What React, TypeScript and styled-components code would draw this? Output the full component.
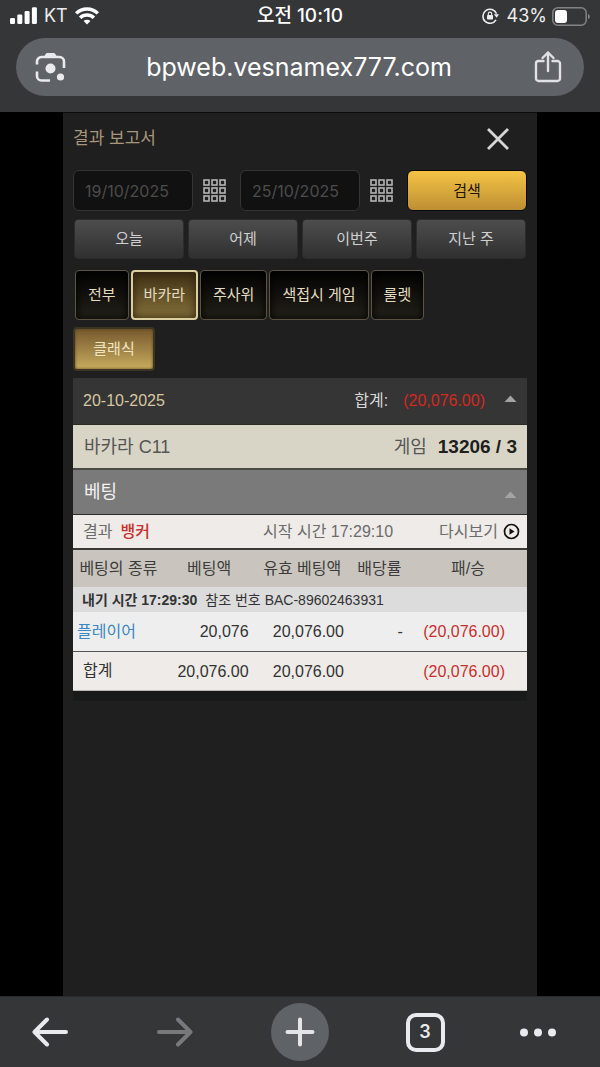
import React, { useState } from "react";
import styled, { createGlobalStyle, css } from "styled-components";

const GlobalStyle = createGlobalStyle`
  *, *::before, *::after { box-sizing: border-box; }
  body { margin: 0; background: #000; }
  button, input { font: inherit; color: inherit; margin: 0; }
  button { cursor: pointer; }
`;

const systemFont = `Inter, "Noto Sans CJK KR", sans-serif`;
const reportFont = `"Liberation Sans", "Noto Sans CJK KR", sans-serif`;

const Page = styled.div`
  display: flex;
  flex-direction: column;
  min-height: 100vh;
  font-family: ${reportFont};
`;

/* ---------- browser chrome ---------- */

const BrowserTop = styled.header`
  padding-bottom: 16px;
  background: #353638;
  color: #fff;
  font-family: ${systemFont};
`;

const StatusBar = styled.div`
  display: grid;
  grid-template-columns: 1fr auto 1fr;
  align-items: center;
  height: 32px;
  margin-bottom: 6px;
  padding: 0 10px;
  font-size: 18px;
  line-height: 24px;
`;

const StatusGroup = styled.div<{ $end?: boolean }>`
  display: flex;
  align-items: center;
  gap: ${(p) => (p.$end ? 8 : 7)}px;
  justify-content: ${(p) => (p.$end ? "flex-end" : "flex-start")};
  color: #ececec;
`;

const Clock = styled.time`
  font-size: 19px;
  font-weight: 500;
`;

const BatteryGroup = styled.span`
  display: flex;
  align-items: center;
  gap: 5px;
`;

const AddressBar = styled.div`
  display: flex;
  align-items: center;
  height: 58px;
  margin: 0 16px;
  padding: 0 18px 0 16px;
  border-radius: 29px;
  background: #5f6267;
`;

const Address = styled.input`
  flex: 1;
  min-width: 0;
  padding: 0;
  border: 0;
  outline: 0;
  background: transparent;
  font-size: 25px;
  line-height: 32px;
  text-align: center;
`;

const IconButton = styled.button`
  display: flex;
  align-items: center;
  justify-content: center;
  width: 36px;
  height: 40px;
  padding: 0;
  border: 0;
  background: none;
`;

const BrowserToolbar = styled.nav`
  display: flex;
  align-items: center;
  justify-content: space-between;
  height: 71px;
  padding: 0 20px;
  background: #353638;
  border-top: 1px solid #28292a;
  font-family: ${systemFont};
`;

const ToolbarButton = styled.button<{ $start?: boolean }>`
  display: flex;
  align-items: center;
  justify-content: ${(p) => (p.$start ? "flex-start" : "center")};
  width: 60px;
  height: 60px;
  padding: 0;
  border: 0;
  background: none;
  color: #e8eaed;
  &:disabled {
    color: #77797b;
  }
`;

const PlusDisc = styled.span`
  display: flex;
  align-items: center;
  justify-content: center;
  width: 58px;
  height: 58px;
  border-radius: 50%;
  background: #5f6368;
`;

const TabCount = styled.span`
  display: flex;
  align-items: center;
  justify-content: center;
  width: 39px;
  height: 39px;
  border: 4px solid #e8eaed;
  border-radius: 10px;
  font-size: 18px;
  font-weight: 600;
  line-height: 20px;
`;

/* ---------- report panel ---------- */

const Panel = styled.main`
  flex: 1;
  margin: 0 63px;
  padding: 0 10px 20px;
  border-top: 1px solid #0c0c0c;
  background: #1f1f1f;
`;

const TitleRow = styled.div`
  display: flex;
  align-items: center;
  justify-content: space-between;
  height: 51px;
  margin-bottom: 6px;
  padding-right: 11px;
`;

const Title = styled.h1`
  margin: 0;
  color: #a8967a;
  font-size: 17px;
  font-weight: 400;
  line-height: 24px;
`;

const DateForm = styled.form`
  display: grid;
  grid-template-columns: 1fr 47px 1fr 47px 1fr;
  align-items: center;
  margin-bottom: 8px;
`;

const DateInput = styled.input`
  width: 100%;
  min-width: 0;
  height: 41px;
  padding: 0 11px;
  border: 1px solid #343434;
  border-radius: 6px;
  outline: 0;
  background: #111;
  color: #4c4c4c;
  font-family: ${systemFont};
  font-size: 16px;
`;

const CalendarButton = styled(IconButton)`
  width: 43px;
  color: #b4b4b4;
`;

const SearchButton = styled.button`
  height: 41px;
  padding: 0;
  border: 1px solid #0a0a0a;
  border-radius: 6px;
  background: linear-gradient(#f4c344, #bd8f33);
  color: #1d1503;
  font-size: 15px;
  line-height: 20px;
`;

const QuickRow = styled.div`
  display: grid;
  grid-template-columns: repeat(4, 1fr);
  gap: 4px;
  margin-bottom: 11px;
  padding: 0 1px;
`;

const QuickButton = styled.button`
  height: 40px;
  padding: 0;
  border: 1px solid #2c2c2c;
  border-radius: 4px;
  background: linear-gradient(#4d4d4d, #303030);
  color: #cfcfcf;
  font-size: 15px;
  line-height: 20px;
`;

const TabRow = styled.div`
  display: flex;
  flex-wrap: wrap;
  gap: 2px;
  margin-bottom: 7px;
  padding: 0 2px;
`;

const GameTab = styled.button<{ $active: boolean }>`
  height: 50px;
  padding: 0 12px;
  border: 1px solid #5c5443;
  border-radius: 4px;
  background: linear-gradient(#020202, #232119);
  box-shadow: inset 0 0 8px #000;
  color: #e4dcc0;
  font-size: 15px;
  line-height: 20px;
  ${(p) =>
    p.$active &&
    css`
      border: 2px solid #dccf9f;
      padding: 0 11px;
      background: linear-gradient(#3f3015, #85713a);
      box-shadow: inset 0 0 10px #2c210d;
    `}
`;

const SubTab = styled.button`
  display: block;
  width: 82px;
  height: 44px;
  margin-bottom: 7px;
  padding: 0;
  border: 2px solid #3d3523;
  border-radius: 4px;
  background: linear-gradient(#76592e, #c6ab5d);
  box-shadow: inset 0 0 3px #5b431a;
  color: #f0e5c2;
  font-size: 15px;
  line-height: 20px;
`;

const Report = styled.section`
  border-bottom: 10px solid #181a19;
  color: #444;
`;

const Bar = styled.div`
  display: flex;
  align-items: center;
  width: 100%;
  padding: 0 10px;
  border: 0;
  border-bottom: 1px solid #2a2a26;
  text-align: left;
`;

const DayBar = styled(Bar)`
  height: 47px;
  background: #353535;
  color: #d6c7a0;
  font-size: 16px;
  line-height: 24px;
`;

const DayTotal = styled.span`
  margin-left: auto;
  color: #d8d8d8;
`;

const DayAmount = styled.span`
  margin: 0 19px 0 15px;
  color: #d6281f;
`;

const GameBar = styled(Bar)`
  height: 45px;
  padding: 0 10px 0 11px;
  border-bottom: 2px solid #4b4a45;
  background: #d9d5c6;
  color: #555;
  font-size: 18px;
  line-height: 24px;
`;

const GameLabel = styled.span`
  margin-left: auto;
`;

const GameNumber = styled.strong`
  margin-left: 11px;
  color: #1e1e1e;
  font-size: 19px;
`;

const BetBar = styled(Bar)`
  height: 45px;
  padding: 0 10px 0 11px;
  background: #7a7a7a;
  color: #f2f2f2;
  font-size: 18px;
  line-height: 24px;
`;

const Caret = styled.svg<{ $corner?: boolean }>`
  display: block;
  color: #a3a3a3;
  ${(p) =>
    p.$corner &&
    css`
      align-self: flex-end;
      margin: 0 0 11px auto;
    `}
`;

const ResultBar = styled(Bar)`
  height: 35px;
  padding-right: 7px;
  border-bottom: 2px solid #3a3935;
  background: #efebe8;
  color: #6b6b6b;
  font-size: 16px;
  line-height: 24px;
`;

const Winner = styled.span`
  margin-left: 8px;
  color: #c9302c;
  font-weight: 500;
`;

const StartTime = styled.span`
  margin: 0 46px 0 auto;
`;

const Replay = styled.a`
  display: flex;
  align-items: center;
  gap: 5px;
  color: inherit;
  text-decoration: none;
`;

const BetTable = styled.table`
  width: 100%;
  border-collapse: collapse;
  table-layout: fixed;
  color: #333;
  font-size: 16px;
  line-height: 24px;
`;

const HeadCell = styled.th`
  height: 37px;
  padding: 0;
  background: #c9c5be;
  color: #3c3c3c;
  font-weight: 400;
  white-space: nowrap;
`;

const ReferenceCell = styled.td`
  height: 25px;
  padding: 0 9px;
  background: #dcdcdc;
  font-size: 14px;
  white-space: nowrap;
`;

const BetTime = styled.strong`
  margin-right: 8px;
`;

const BetRow = styled.tr<{ $total?: boolean }>`
  height: 39px;
  background: ${(p) => (p.$total ? "#efebe8" : "#eeeeef")};
  border-bottom: 1px solid ${(p) => (p.$total ? "#b9b6b3" : "#555")};
`;

const LabelCell = styled.th<{ $total?: boolean }>`
  padding: 1px 0 0 ${(p) => (p.$total ? 10 : 4)}px;
  color: ${(p) => (p.$total ? "inherit" : "#3b86c4")};
  font-weight: 400;
  text-align: left;
`;

const AmountCell = styled.td`
  padding: 2px 6px 0 0;
  text-align: right;
`;

const LossCell = styled.td`
  padding: 2px 22px 0 0;
  color: #c9302c;
  text-align: right;
`;

/* ---------- drawings ---------- */

const SignalIcon = () => (
  <svg width="27" height="18" viewBox="0 0 27 18" fill="#fff" aria-hidden="true">
    <rect x="0" y="11" width="5" height="6" rx="1.3" />
    <rect x="7.3" y="7.5" width="5" height="9.5" rx="1.3" />
    <rect x="14.6" y="4" width="5" height="13" rx="1.3" />
    <rect x="21.9" y="0.3" width="5" height="16.7" rx="1.3" />
  </svg>
);

const WifiIcon = () => (
  <svg width="24" height="18" viewBox="0 0 24 18" fill="none" stroke="#fff" strokeWidth="3.4" aria-hidden="true">
    <path d="M1.2 6.4a15.3 15.3 0 0 1 21.6 0" />
    <path d="M5.1 10.8a9.8 9.8 0 0 1 13.8 0" />
    <path d="M12 17.6l-3.4-3.5a4.8 4.8 0 0 1 6.8 0z" fill="#fff" stroke="none" />
  </svg>
);

const RotationLockIcon = () => (
  <svg width="17" height="16" viewBox="0 0 17 16" fill="none" aria-hidden="true">
    <path d="M14.5 5.8A7 7 0 1 0 14 11.8" stroke="#eee" strokeWidth="1.6" />
    <path d="M11.8 6.2h5.2l-2.3 3.6z" fill="#eee" />
    <rect x="5" y="7" width="6" height="4.6" rx="0.8" fill="#eee" />
    <path d="M6.3 7V5.8a1.7 1.7 0 0 1 3.4 0V7" stroke="#eee" strokeWidth="1.1" />
  </svg>
);

const BatteryIcon = () => (
  <svg width="38" height="19" viewBox="0 0 38 19" fill="none" aria-hidden="true">
    <rect x="0.8" y="0.8" width="33.4" height="17.4" rx="5" stroke="#828385" strokeWidth="1.5" />
    <rect x="3" y="3" width="12" height="13" rx="3" fill="#fff" />
    <path d="M36 7v5c1.4-.5 1.8-1.5 1.8-2.5S37.4 7.5 36 7z" fill="#828385" />
  </svg>
);

const LensIcon = () => (
  <svg width="31" height="31" viewBox="0 0 31 31" fill="none" aria-hidden="true">
    <path
      d="M2 12.500V9.500a4.500 4.500 0 0 1 4.500-4.500h18a4.500 4.500 0 0 1 4.500 4.500V16M2 19.500v4.500a4.500 4.500 0 0 0 4.500 4.500h8.500"
      stroke="#e8eaed"
      strokeWidth="2.6"
    />
    <path d="M8.500 5.500l2.200-3.600C11 1.300 11.600 1 12.300 1h6.400c.7 0 1.300.3 1.600.9l2.200 3.600z" fill="#e8eaed" />
    <circle cx="15.5" cy="16.5" r="5" fill="#e8eaed" />
    <circle cx="25.5" cy="25" r="3.6" fill="#e8eaed" />
  </svg>
);

const ShareIcon = () => (
  <svg width="28" height="34" viewBox="0 0 28 34" fill="none" stroke="#dfe1e5" strokeWidth="2.4" strokeLinecap="round" strokeLinejoin="round" aria-hidden="true">
    <path d="M9.500 11H4.500A2.500 2.500 0 0 0 2 13.500v15A2.500 2.500 0 0 0 4.500 31h19a2.500 2.500 0 0 0 2.500-2.500v-15a2.500 2.500 0 0 0-2.500-2.500h-5" />
    <path d="M14 21V2.500M8.500 8L14 2.500 19.500 8" />
  </svg>
);

const CloseIcon = () => (
  <svg width="24" height="24" viewBox="0 0 24 24" stroke="#d6d6d6" strokeWidth="2.8" aria-hidden="true">
    <path d="M2 2l20 20M22 2L2 22" />
  </svg>
);

const CalendarGridIcon = () => (
  <svg width="23" height="23" viewBox="0 0 23 23" fill="none" stroke="currentColor" strokeWidth="1.6" aria-hidden="true">
    {[0, 8, 16].map((y) =>
      [0, 8, 16].map((x) => <rect key={`${x}-${y}`} x={x + 1} y={y + 1} width="5" height="5" />)
    )}
  </svg>
);

const CaretUp = ({ corner }: { corner?: boolean }) => (
  <Caret $corner={corner} width="13" height="12" viewBox="0 0 13 12" fill="currentColor" aria-hidden="true">
    <path d="M0.500 7L6.500 0.500 12.500 7z" />
  </Caret>
);

const PlayIcon = () => (
  <svg width="17" height="17" viewBox="0 0 17 17" fill="none" aria-hidden="true">
    <circle cx="8.5" cy="8.5" r="7" stroke="#111" strokeWidth="1.7" />
    <path d="M6.500 5.200v6.600l5-3.300z" fill="#111" />
  </svg>
);

const ArrowIcon = ({ forward }: { forward?: boolean }) => (
  <svg width="36" height="32" viewBox="0 0 36 32" fill="none" stroke="currentColor" strokeWidth="4" strokeLinecap="round" strokeLinejoin="round" aria-hidden="true">
    <path d={forward ? "M2 16h31M21 3.500L33.500 16 21 28.500" : "M34 16H3M15 3.500L2.500 16 15 28.500"} />
  </svg>
);

const PlusIcon = () => (
  <svg width="30" height="30" viewBox="0 0 30 30" stroke="#e3e5e8" strokeWidth="4" strokeLinecap="round" aria-hidden="true">
    <path d="M15 2.500v25M2.500 15h25" />
  </svg>
);

const MoreIcon = () => (
  <svg width="36" height="9" viewBox="0 0 36 9" fill="currentColor" aria-hidden="true">
    <circle cx="4" cy="4.5" r="4" />
    <circle cx="18" cy="4.5" r="4" />
    <circle cx="32" cy="4.5" r="4" />
  </svg>
);

/* ---------- page ---------- */

const ranges = ["오늘", "어제", "이번주", "지난 주"];
const games = ["전부", "바카라", "주사위", "색접시 게임", "룰렛"];
const columns = [
  { label: "베팅의 종류", width: "20%" },
  { label: "베팅액", width: "20%" },
  { label: "유효 베팅액", width: "21%" },
  { label: "배당률", width: "13%" },
  { label: "패/승", width: "26%" },
];

export default function App() {
  const [game, setGame] = useState("바카라");

  return (
    <Page>
      <GlobalStyle />
      <BrowserTop>
        <StatusBar>
          <StatusGroup>
            <SignalIcon />
            <span>KT</span>
            <WifiIcon />
          </StatusGroup>
          <Clock>오전 10:10</Clock>
          <StatusGroup $end>
            <RotationLockIcon />
            <BatteryGroup>
              43%
              <BatteryIcon />
            </BatteryGroup>
          </StatusGroup>
        </StatusBar>
        <AddressBar>
          <IconButton type="button" aria-label="렌즈">
            <LensIcon />
          </IconButton>
          <Address aria-label="주소" defaultValue="bpweb.vesnamex777.com" />
          <IconButton type="button" aria-label="공유">
            <ShareIcon />
          </IconButton>
        </AddressBar>
      </BrowserTop>

      <Panel>
        <TitleRow>
          <Title>결과 보고서</Title>
          <IconButton type="button" aria-label="닫기">
            <CloseIcon />
          </IconButton>
        </TitleRow>

        <DateForm onSubmit={(e) => e.preventDefault()}>
          <DateInput aria-label="시작일" defaultValue="19/10/2025" />
          <CalendarButton type="button" aria-label="시작일 달력">
            <CalendarGridIcon />
          </CalendarButton>
          <DateInput aria-label="종료일" defaultValue="25/10/2025" />
          <CalendarButton type="button" aria-label="종료일 달력">
            <CalendarGridIcon />
          </CalendarButton>
          <SearchButton type="submit">검색</SearchButton>
        </DateForm>

        <QuickRow>
          {ranges.map((label) => (
            <QuickButton type="button" key={label}>
              {label}
            </QuickButton>
          ))}
        </QuickRow>

        <TabRow>
          {games.map((label) => (
            <GameTab type="button" key={label} $active={label === game} aria-pressed={label === game} onClick={() => setGame(label)}>
              {label}
            </GameTab>
          ))}
        </TabRow>
        <SubTab type="button">클래식</SubTab>

        <Report>
          <DayBar as="button" type="button" aria-expanded="true">
            <span>20-10-2025</span>
            <DayTotal>합계:</DayTotal>
            <DayAmount>(20,076.00)</DayAmount>
            <CaretUp />
          </DayBar>
          <GameBar>
            <span>바카라 C11</span>
            <GameLabel>게임</GameLabel>
            <GameNumber>13206 / 3</GameNumber>
          </GameBar>
          <BetBar as="button" type="button" aria-expanded="true">
            <span>베팅</span>
            <CaretUp corner />
          </BetBar>
          <ResultBar>
            <span>결과</span>
            <Winner>뱅커</Winner>
            <StartTime>시작 시간 17:29:10</StartTime>
            <Replay href="#replay">
              다시보기
              <PlayIcon />
            </Replay>
          </ResultBar>
          <BetTable>
            <colgroup>
              {columns.map((c) => (
                <col key={c.label} width={c.width} />
              ))}
            </colgroup>
            <thead>
              <tr>
                {columns.map((c) => (
                  <HeadCell scope="col" key={c.label}>
                    {c.label}
                  </HeadCell>
                ))}
              </tr>
            </thead>
            <tbody>
              <tr>
                <ReferenceCell colSpan={5}>
                  <BetTime>내기 시간 17:29:30</BetTime>
                  참조 번호 BAC-89602463931
                </ReferenceCell>
              </tr>
              <BetRow>
                <LabelCell scope="row">플레이어</LabelCell>
                <AmountCell>20,076</AmountCell>
                <AmountCell>20,076.00</AmountCell>
                <AmountCell>-</AmountCell>
                <LossCell>(20,076.00)</LossCell>
              </BetRow>
              <BetRow $total>
                <LabelCell scope="row" $total>
                  합계
                </LabelCell>
                <AmountCell>20,076.00</AmountCell>
                <AmountCell>20,076.00</AmountCell>
                <AmountCell />
                <LossCell>(20,076.00)</LossCell>
              </BetRow>
            </tbody>
          </BetTable>
        </Report>
      </Panel>

      <BrowserToolbar aria-label="브라우저">
        <ToolbarButton type="button" aria-label="뒤로">
          <ArrowIcon />
        </ToolbarButton>
        <ToolbarButton type="button" aria-label="앞으로" disabled>
          <ArrowIcon forward />
        </ToolbarButton>
        <ToolbarButton type="button" aria-label="새 탭">
          <PlusDisc>
            <PlusIcon />
          </PlusDisc>
        </ToolbarButton>
        <ToolbarButton type="button" aria-label="열린 탭 3개">
          <TabCount>3</TabCount>
        </ToolbarButton>
        <ToolbarButton type="button" aria-label="더보기" $start>
          <MoreIcon />
        </ToolbarButton>
      </BrowserToolbar>
    </Page>
  );
}
